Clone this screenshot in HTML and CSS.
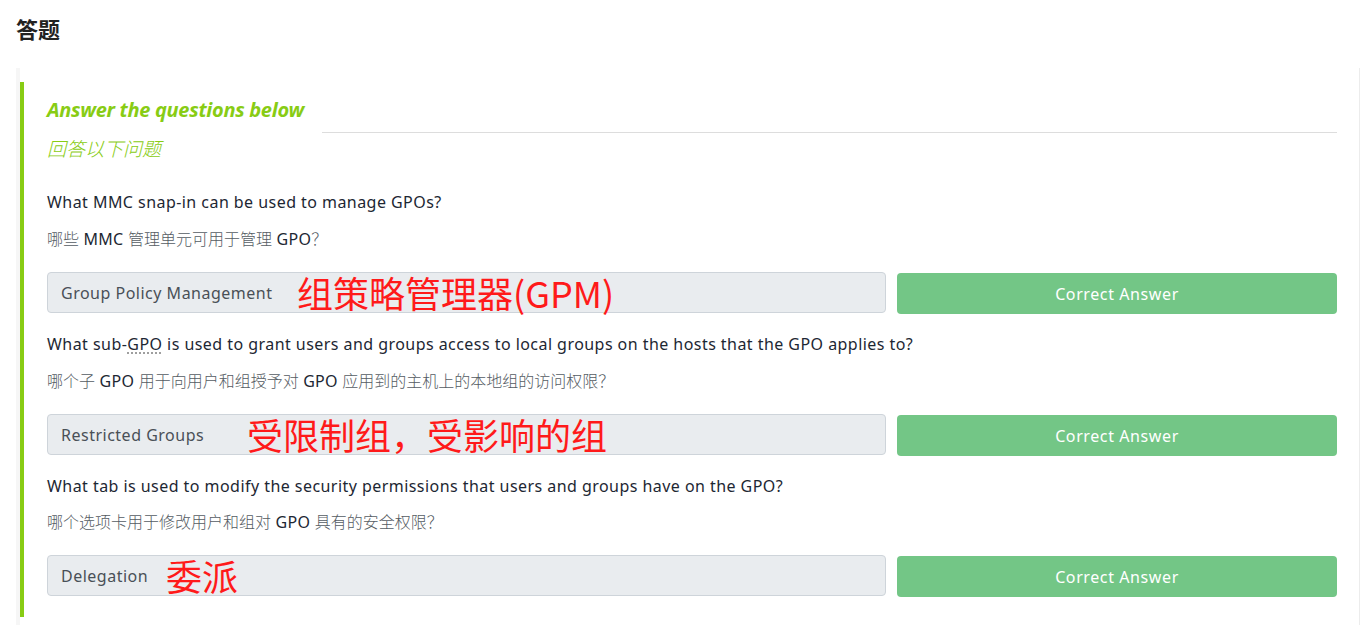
FILE: index.html
```html
<!DOCTYPE html>
<html lang="zh-CN">
<head>
<meta charset="utf-8">
<title>答题</title>
<link rel="stylesheet" href="styles.css">
</head>
<body>
<h1 class="page-title">答题</h1>
<section class="card">
  <div class="task">
    <div class="task-head">
      <h2 class="task-title">Answer the questions below</h2>
      <div class="task-rule"></div>
    </div>
    <p class="task-sub">回答以下问题</p>

    <div class="question">
      <p class="q-en">What MMC snap-in can be used to manage GPOs?</p>
      <p class="q-zh"><span class="han">哪些</span> MMC <span class="han">管理单元可用于管理</span> GPO<span class="han">？</span></p>
      <div class="answer-row">
        <div class="answer-box">
          <span class="answer-text">Group Policy Management</span>
          <span class="note note-1">组策略管理器(GPM)</span>
        </div>
        <button class="btn-correct" type="button">Correct Answer</button>
      </div>
    </div>

    <div class="question">
      <p class="q-en">What sub-<abbr class="abbr" title="Group Policy Object">GPO</abbr> is used to grant users and groups access to local groups on the hosts that the GPO applies to?</p>
      <p class="q-zh"><span class="han">哪个子</span> GPO <span class="han">用于向用户和组授予对</span> GPO <span class="han">应用到的主机上的本地组的访问权限？</span></p>
      <div class="answer-row">
        <div class="answer-box">
          <span class="answer-text">Restricted Groups</span>
          <span class="note note-2">受限制组，受影响的组</span>
        </div>
        <button class="btn-correct" type="button">Correct Answer</button>
      </div>
    </div>

    <div class="question">
      <p class="q-en">What tab is used to modify the security permissions that users and groups have on the GPO?</p>
      <p class="q-zh q-zh-tight"><span class="han">哪个选项卡用于修改用户和组对</span> GPO <span class="han">具有的安全权限？</span></p>
      <div class="answer-row">
        <div class="answer-box">
          <span class="answer-text">Delegation</span>
          <span class="note note-3">委派</span>
        </div>
        <button class="btn-correct" type="button">Correct Answer</button>
      </div>
    </div>
  </div>
</section>
</body>
</html>
```
FILE: styles.css
```css
html, body {
  margin: 0;
  padding: 0;
  background: #ffffff;
}

body {
  font-family: "Noto Sans", "Noto Sans CJK SC", sans-serif;
  color: #212529;
  font-size: 16px;
}

.page-title {
  margin: 0;
  padding: 13px 0 0 16px;
  font-family: "Noto Sans CJK SC", sans-serif;
  font-size: 22px;
  line-height: 30px;
  font-weight: 700;
  color: #222;
}

.card {
  margin: 25px 5px 0 16px;
  padding: 14px 22px 0 0;
  background: #ffffff;
  border-left: 4px solid #f6f6f6;
  border-right: 1px solid #ececec;
  min-height: 560px;
}

.task {
  border-left: 4px solid #88cc14;
  padding: 14px 0 20px 23px;
  background: #ffffff;
}

.task-head {
  display: flex;
  align-items: flex-end;
}

.task-title {
  margin: 0 0 9px 0;
  font-size: 20px;
  line-height: 28px;
  font-style: italic;
  font-weight: 700;
  color: #88cc14;
  letter-spacing: -0.3px;
  white-space: nowrap;
}

.task-rule {
  flex: 1;
  margin-left: 18px;
  border-top: 1px solid #dddddd;
  height: 0;
}

.task-sub {
  margin: 1px 0 28px 0;
  font-family: "Noto Sans CJK SC", sans-serif;
  font-size: 19px;
  line-height: 28px;
  font-style: italic;
  color: #88cc14;
  font-weight: 300;
}

.question {
  margin-bottom: 18px;
}

.question:last-child {
  margin-bottom: 0;
}

.q-en {
  margin: 0;
  font-size: 16px;
  line-height: 24px;
  letter-spacing: 0.45px;
  color: #1d2733;
}

.q-zh {
  margin: 12px 0 0 0;
  font-size: 16px;
  line-height: 24px;
  letter-spacing: 0.3px;
  color: #1d2733;
}

.q-zh-tight {
  margin-top: 11px;
}

.han {
  font-family: "Noto Sans CJK SC", sans-serif;
  font-weight: 300;
  letter-spacing: 0;
  color: #555c63;
}

.abbr {
  text-decoration: underline dotted #888;
  text-underline-offset: 3px;
  cursor: help;
}

.answer-row {
  display: grid;
  grid-template-columns: 1fr 440px;
  gap: 11px;
  margin-top: 21px;
}

.answer-box {
  position: relative;
  box-sizing: border-box;
  height: 41px;
  padding: 0 13px;
  display: flex;
  align-items: center;
  background: #e9ecef;
  border: 1px solid #ced4da;
  border-radius: 4px;
  color: #495057;
  font-size: 16px;
  letter-spacing: 0.5px;
}

.note {
  position: absolute;
  top: 50%;
  transform: translateY(-52%);
  font-family: "Noto Sans CJK SC", sans-serif;
  font-size: 36px;
  line-height: 1;
  letter-spacing: 0;
  color: #ff1a1a;
  white-space: nowrap;
}

.note-1 { left: 249px; }
.note-2 { left: 199px; }
.note-3 { left: 118px; }

.btn-correct {
  box-sizing: border-box;
  height: 41px;
  margin-top: 1px;
  border: none;
  border-radius: 4px;
  background: #73c686;
  color: #ffffff;
  font-family: "Noto Sans", sans-serif;
  font-size: 16px;
  letter-spacing: 0.6px;
  cursor: default;
}
```
